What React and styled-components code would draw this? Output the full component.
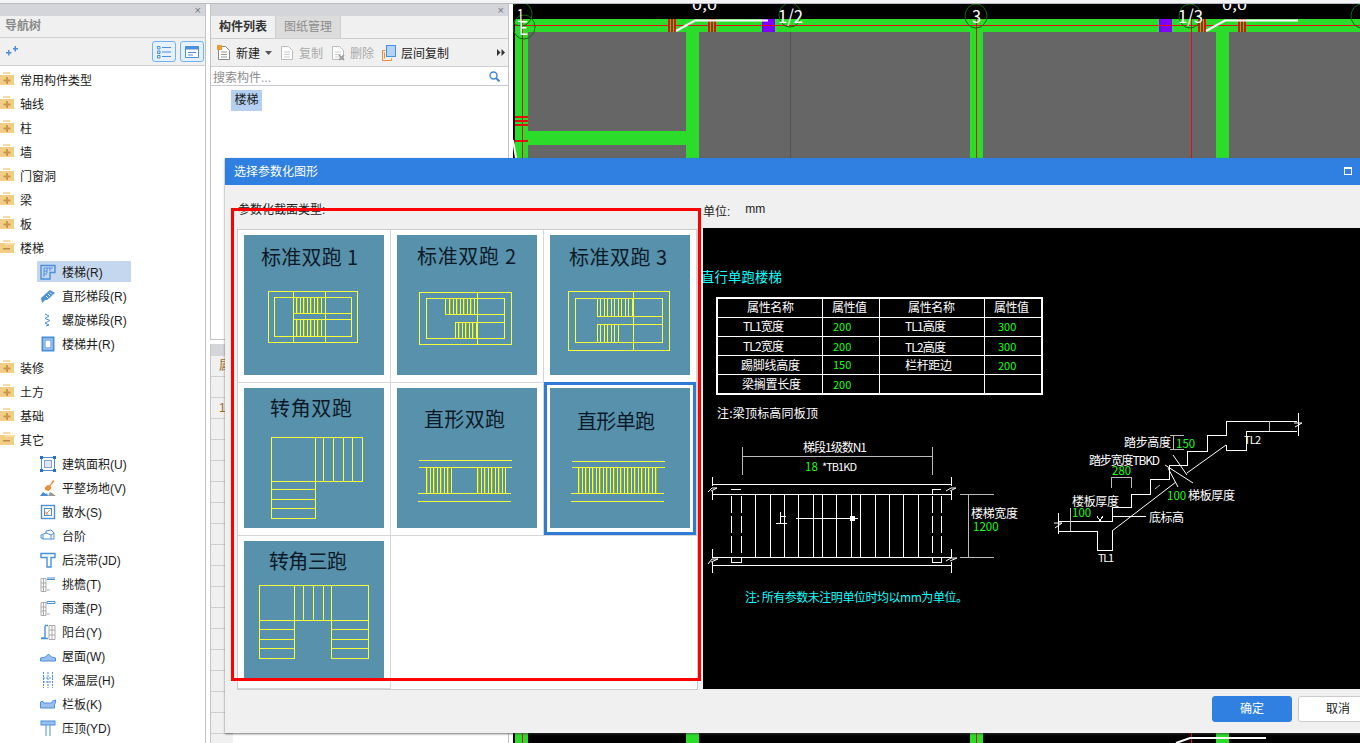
import React from 'react'
import styled, { createGlobalStyle } from 'styled-components'

const GlobalStyle = createGlobalStyle`
  html, body { margin: 0; padding: 0; background: #fff; overflow: hidden; }
  body { font-family: "Liberation Sans", "Noto Sans CJK SC", sans-serif; font-size: 12px; color: #1a1a1a; }
  * { box-sizing: border-box; }
`

const BLUE = '#2f80e0'
const ICON = '#4a8fdc'

const Screen = styled.div`
  position: relative;
  width: 1360px;
  height: 743px;
  overflow: hidden;
  display: flex;
  flex-direction: column;
`
const TopStrip = styled.div`
  height: 4px;
  flex: none;
  background: #f4f4f6;
  border-bottom: 1px solid #b9bac2;
`
const Main = styled.div`
  flex: 1;
  min-height: 0;
  display: flex;
`

/* dock panels */
const PanelHead = styled.div`
  height: 12px;
  flex: none;
  background: #d3d5da;
  display: flex;
  align-items: center;
  justify-content: flex-end;
  padding-right: 4px;
  color: #777;
  font-size: 11px;
  line-height: 1;
`
const NavPanel = styled.aside`
  width: 206px;
  flex: none;
  display: flex;
  flex-direction: column;
  border-right: 1px solid #c4c4c8;
  overflow: hidden;
`
const NavTitle = styled.div`
  height: 22px;
  flex: none;
  background: #f0f0f0;
  border-bottom: 1px solid #cfcfcf;
  padding-left: 5px;
  line-height: 21px;
  color: #8a8a8a;
  font-weight: 700;
`
const NavTools = styled.div`
  height: 28px;
  flex: none;
  background: #f0f0f0;
  border-bottom: 1px solid #cfcfcf;
  display: flex;
  align-items: center;
  padding: 0 1px 0 4px;
  gap: 4px;
`
const ViewButton = styled.div`
  width: 24px;
  height: 21px;
  border: 1px solid #6fb3f2;
  border-radius: 3px;
  background: #e6f1fc;
  display: flex;
  align-items: center;
  justify-content: center;
  &:first-of-type { margin-left: auto; }
`
const Tree = styled.div`
  padding-top: 1px;
`
const Row = styled.div`
  height: 24px;
  display: flex;
  align-items: center;
  white-space: nowrap;
  padding-left: ${p => (p.$child ? 37 : 0)}px;
`
const FolderLabel = styled.span`
  margin-left: 5px;
`
const Item = styled.div`
  width: 94px;
  height: 21px;
  margin-top: 1px;
  display: flex;
  align-items: center;
  gap: 6px;
  padding-left: 3px;
  background: ${p => (p.$selected ? '#c5d7ef' : 'transparent')};
`

const ListColumn = styled.div`
  width: 303px;
  flex: none;
  margin-left: 4px;
  padding-right: 4px;
  display: flex;
  flex-direction: column;
  gap: 4px;
`
const ListPanel = styled.section`
  height: 336px;
  flex: none;
  display: flex;
  flex-direction: column;
  border-left: 1px solid #c4c4c8;
  border-right: 1px solid #c4c4c8;
  border-bottom: 1px solid #c4c4c8;
`
const Tabs = styled.div`
  height: 23px;
  flex: none;
  display: flex;
  background: #f0f0f0;
  border-bottom: 1px solid #cfcfcf;
`
const Tab = styled.div`
  width: 65px;
  text-align: center;
  line-height: 22px;
  color: ${p => (p.$active ? '#333' : '#8c8c8c')};
  font-weight: ${p => (p.$active ? 700 : 400)};
  background: ${p => (p.$active ? '#f0f0f0' : '#dcdcdc')};
  border-right: 1px solid #cfcfcf;
`
const ListTools = styled.div`
  height: 28px;
  flex: none;
  display: flex;
  align-items: center;
  gap: 8px;
  padding-left: 6px;
  background: #f0f0f0;
  border-bottom: 1px solid #cfcfcf;
`
const ToolButton = styled.div`
  display: flex;
  align-items: center;
  gap: 5px;
  color: ${p => (p.$disabled ? '#aaa' : '#222')};
`
const MoreArrows = styled.div`
  margin-left: auto;
  padding-right: 3px;
  display: flex;
`
const Search = styled.div`
  height: 19px;
  flex: none;
  display: flex;
  align-items: center;
  justify-content: space-between;
  padding: 0 8px 0 2px;
  color: #8c8c8c;
  border-bottom: 1px solid #c9c9cf;
`
const ListBody = styled.div`
  flex: 1;
  padding: 4px 0 0 20px;
`
const Chosen = styled.span`
  display: inline-block;
  width: 31px;
  height: 21px;
  line-height: 21px;
  text-align: center;
  background: #b4cff0;
`
const PropsPanel = styled.section`
  flex: 1;
  min-height: 0;
  overflow: hidden;
  display: flex;
  flex-direction: column;
  border-left: 1px solid #c4c4c8;
  border-right: 1px solid #c4c4c8;
`
const PropRow = styled.div`
  height: 21px;
  flex: none;
  width: 22px;
  padding-left: 8px;
  line-height: 21px;
  background: #f0f0f0;
  border-bottom: 1px solid #cfcfcf;
  color: #a06a20;
`

const Canvas = styled.div`
  flex: 1;
  min-width: 0;
  background: #000;
`
const FullSvg = styled.svg`
  display: block;
`

/* dialog */
const Dialog = styled.div`
  position: absolute;
  left: 225px;
  top: 158px;
  width: 1163px;
  height: 575px;
  background: #f0f0f0;
  box-shadow: 0 1px 2px rgba(60, 60, 60, 0.7);
  display: flex;
  flex-direction: column;
`
const DialogTitle = styled.div`
  height: 27px;
  flex: none;
  background: ${BLUE};
  color: #fff;
  display: flex;
  align-items: center;
  justify-content: space-between;
  padding: 0 36px 2px 9px;
`
const MaxBox = styled.span`
  width: 8px;
  height: 8px;
  border: 1px solid #fff;
  border-top-width: 2px;
`
const DialogBody = styled.div`
  display: grid;
  grid-template-columns: 478px 1fr;
  grid-template-rows: 43px 461px;
  flex: none;
`
const SectionLabel = styled.div`
  padding: 15px 0 0 13px;
  color: #222;
`
const UnitLabel = styled.div`
  padding-top: 17px;
  display: flex;
  gap: 15px;
  color: #222;
`
const ShapeFrame = styled.div`
  margin: 1px 0 0 12px;
  width: 461px;
  height: 461px;
  border: 1px solid #ccc;
  background: #fff;
  display: grid;
  grid-template-columns: repeat(3, 153px);
  grid-auto-rows: 153px;
  align-content: start;
`
const ShapeCell = styled.div`
  padding: ${p => (p.$selected ? '6px 0 0 6px' : '5px 0 0 6px')};
  margin-top: ${p => (p.$selected ? -1 : 0)}px;
  border-right: 1px solid #d6d6d6;
  border-bottom: 1px solid #d6d6d6;
  box-shadow: ${p => (p.$selected ? 'inset 0 0 0 3px #2e7bd6' : 'none')};
`
const Thumb = styled.svg`
  display: block;
  width: 140px;
  height: 140px;
  background: #5891ab;
`
const ThumbTitle = styled.text`
  font-family: "Noto Sans CJK SC", sans-serif;
  font-size: 20px;
  fill: #0c1a28;
`
const PlanLine = styled.path`
  fill: none;
  stroke: ${p => (p.$dim ? '#a9b400' : '#f6ff3c')};
  stroke-width: 1;
  shape-rendering: crispEdges;
`
const Preview = styled.div`
  background: #000;
  overflow: hidden;
`
const DialogFooter = styled.div`
  display: flex;
  justify-content: flex-end;
  gap: 6px;
  padding: 7px 10px 0 0;
`
const Button = styled.div`
  width: 80px;
  height: 26px;
  line-height: 24px;
  text-align: center;
  border-radius: 3px;
  border: 1px solid ${p => (p.$primary ? BLUE : '#ccc')};
  background: ${p => (p.$primary ? BLUE : '#fff')};
  color: ${p => (p.$primary ? '#fff' : '#222')};
`
const RedMark = styled.div`
  position: absolute;
  left: 231px;
  top: 208px;
  width: 470px;
  height: 473px;
  border: 3px solid #f00;
  pointer-events: none;
`

/* CAD drawing parts */
const Cad = styled.text`
  font-family: "Noto Sans CJK SC", "Liberation Sans", sans-serif;
  font-size: ${p => p.$size || 12}px;
  fill: ${p => p.$color || '#fff'};
`
const Wire = styled.path`
  fill: none;
  stroke: ${p => p.$color || '#fff'};
  stroke-width: ${p => p.$w || 1};
  shape-rendering: ${p => (p.$smooth ? 'auto' : 'crispEdges')};
`

/* little helpers for the line drawings */
const box = (x, y, x2, y2) => `M${x} ${y}H${x2}V${y2}H${x}Z`
const bars = (x0, x1, step, y0, y1) => {
  let d = ''
  for (let x = x0; x <= x1 + 0.01; x += step) d += `M${Math.round(x)} ${y0}V${y1}`
  return d
}
const hline = (x, x2, ...ys) => ys.map(y => `M${x} ${y}H${x2}`).join('')
const vline = (y, y2, ...xs) => xs.map(x => `M${x} ${y}V${y2}`).join('')
// treads: a bright line every 3.5px, every other one with an olive shadow
const treads = (x0, x1, y0, y1) => bars(x0, x1, 3.5, y0, y1)
const shadows = (x0, x1, y0, y1) => bars(x0 + 1, x1, 7, y0, y1)

const shapes = [
  {
    title: '标准双跑 1', x: 17, w: 97, y: 30,
    d: box(24, 56, 113, 107) + box(30, 62, 107, 101) + vline(56, 107, 49, 81) + hline(49, 107, 78, 84) + treads(52, 79, 62, 78) + treads(52, 79, 84, 101),
    dim: shadows(52, 79, 62, 78) + shadows(52, 79, 84, 101)
  },
  {
    title: '标准双跑 2', x: 20, w: 99, y: 29,
    d: box(22, 57, 114, 109) + box(29, 63, 107, 103) + vline(57, 109, 80) + hline(48, 107, 79) + hline(58, 107, 87) + vline(63, 79, 48) + vline(87, 103, 58) + treads(52, 79, 63, 79) + treads(61, 79, 87, 103),
    dim: shadows(52, 79, 63, 79) + shadows(61, 79, 87, 103)
  },
  {
    title: '标准双跑 3', x: 19, w: 98, y: 30,
    d: box(18, 56, 119, 115) + box(25, 63, 112, 107) + vline(56, 115, 83) + hline(47, 112, 81, 89) + vline(63, 81, 47) + vline(89, 107, 47) + treads(50, 82, 63, 81) + treads(50, 69, 89, 107),
    dim: ''
  },
  {
    title: '转角双跑', x: 26, w: 82, y: 28,
    d: box(27, 49, 118, 93) + box(27, 93, 71, 130) + vline(49, 130, 71) + vline(49, 93, 79, 89, 99, 108) + hline(27, 71, 101, 111, 120),
    dim: ''
  },
  {
    title: '直形双跑', x: 27, w: 81, y: 39,
    d: hline(22, 115, 72, 79) + hline(21, 114, 105, 113) + treads(29, 55, 79, 105) + treads(80, 108, 79, 105),
    dim: shadows(29, 55, 79, 105) + shadows(80, 108, 79, 105)
  },
  {
    title: '直形单跑', x: 27, w: 78, y: 41,
    d: hline(22, 115, 73, 79) + hline(21, 114, 105, 113) + treads(28, 108, 79, 105),
    dim: shadows(28, 108, 79, 105),
    selected: true
  },
  {
    title: '转角三跑', x: 25, w: 78, y: 28,
    d: box(15, 44, 124, 79) + box(15, 79, 50, 117) + box(87, 79, 124, 117) + vline(44, 79, 50, 59, 69, 79, 87) + hline(15, 50, 88, 98, 107) + hline(87, 124, 88, 98, 107),
    dim: ''
  }
]

/* tree icons, all on a 16px box */
const Glyph = ({ name }) => {
  const blue = { fill: 'none', stroke: ICON, strokeWidth: 1 }
  const gray = { fill: 'none', stroke: '#a9a9a9', strokeWidth: 1 }
  const paths = {
    stair: <><path {...blue} strokeWidth="1.4" d="M1 1.5h14v7h-5v6.5H1z" /><path {...blue} d="M4 4h9M4 4v9M7 4v5M10 4v3M4 7h3M4 10h3" /></>,
    flight: <><path fill={ICON} d="M1 10l9-8 5 3-8 7-2 0-3 3z" /><path stroke="#fff" d="M6 8l2 2M8 6l2 2M10 4.500l2 2" /></>,
    spiral: <path {...blue} d="M5 2l4 2-4 2.500 5 2-5 2.500 4 2-3 1" />,
    well: <><rect x="2.500" y="1.500" width="11" height="13" fill="#cfe1f6" stroke={ICON} strokeWidth="2" /><rect x="5" y="4" width="6" height="8" fill="#fff" stroke={ICON} /></>,
    area: <><rect x="1.500" y="1.500" width="13" height="13" fill="#fff" stroke={ICON} /><rect x="4.500" y="4.500" width="7" height="7" fill="#dce6f3" stroke="#8aa8cc" /><path fill="#2c6fc0" d="M0 0h3v3H0zM13 0h3v3h-3zM0 13h3v3H0zM13 13h3v3h-3z" /></>,
    site: <><path fill="#ee8a3a" d="M13 0l1.500 1-4 5 1 2-3 3-3-1-1-2 3-3 2 .5z" /><path fill={ICON} d="M0 16l3-4 3 2 1-1 1 3z" /><path fill="#999" d="M8 16l2-4 2 1 4 3z" /></>,
    apron: <><rect x="1.500" y="1.500" width="13" height="13" fill="#fff" stroke={ICON} strokeWidth="1.400" /><rect x="4.500" y="4.500" width="7" height="7" fill="#fff" stroke={ICON} /><path stroke="#ee8a3a" d="M10.500 5.500L6 10M6 7.500V10h2.500" fill="none" /></>,
    step: <><path {...blue} d="M1 7l5-2v-2l5-1 3 3v6H3l-2-1z" /><path {...blue} d="M6 5l5 2 3-2M11 7v4M3 7v4" /></>,
    band: <path {...blue} strokeWidth="1.400" d="M1 1.500h14v4h-4V15H7V5.500H1z" />,
    eave: <><path {...gray} d="M1 2.500h5v13H1zM1 7h5M1 11h5M3.500 2.500v13M7 14h3" /><path stroke={ICON} fill="none" strokeWidth="1.200" d="M7 2h8M7 3.500h8" /></>,
    canopy: <><path {...gray} d="M1 2.500h5v13H1zM1 7h5M1 11h5M3.500 2.500v13M7 14h3" /><path stroke={ICON} fill="none" d="M7 1.500h8v2H7z" /></>,
    balcony: <><path {...gray} d="M9 1.500h6v14H9zM9 6h6M9 11h6M12 1.500v14" /><path stroke={ICON} fill="none" strokeWidth="1.400" d="M5 2v12H1M5 1.500h3M1 14.500h7" /></>,
    roof: <path fill="#9cc0ec" stroke={ICON} d="M.5 13v-3l5-1 3-3 3 3 4 1v3z" />,
    insul: <path {...blue} strokeDasharray="2 1" d="M3.500 0v16M8 0v16M12.500 0v16M3 6h10M3 10h10" />,
    rail: <path fill="#9cc0ec" stroke={ICON} d="M.5 6l2-1 1 2h8l1-2 3-1v2l-1 3v3H.5z" />,
    coping: <><rect x="1" y="1" width="14" height="4" fill="#9cc0ec" stroke={ICON} /><path stroke={ICON} d="M6 5v11M10 5v11" /></>
  }
  return <svg width="16" height="16" viewBox="0 0 16 16">{paths[name]}</svg>
}

const Folder = ({ open }) => (
  <svg width="15" height="14" viewBox="0 0 15 14">
    <path fill="#f7dca8" d="M3 0h7l1 2H3z" />
    <path fill="#f3cd84" d="M0 3h14v10H0z" />
    {open
      ? <><path fill="#f7dca8" d="M5 3h10v2H5z" /><path fill="#b98f4a" d="M3 8h7v1.500H3z" /></>
      : <path fill="#c79a4e" d="M6 5h2v2.500h2.500v2H8V12H6V9.500H3.500v-2H6z" />}
  </svg>
)

const tree = [
  { label: '常用构件类型' }, { label: '轴线' }, { label: '柱' }, { label: '墙' },
  { label: '门窗洞' }, { label: '梁' }, { label: '板' }, { label: '楼梯', open: true },
  { label: '楼梯(R)', icon: 'stair', selected: true },
  { label: '直形梯段(R)', icon: 'flight' },
  { label: '螺旋梯段(R)', icon: 'spiral' },
  { label: '楼梯井(R)', icon: 'well' },
  { label: '装修' }, { label: '土方' }, { label: '基础' }, { label: '其它', open: true },
  { label: '建筑面积(U)', icon: 'area' },
  { label: '平整场地(V)', icon: 'site' },
  { label: '散水(S)', icon: 'apron' },
  { label: '台阶', icon: 'step' },
  { label: '后浇带(JD)', icon: 'band' },
  { label: '挑檐(T)', icon: 'eave' },
  { label: '雨蓬(P)', icon: 'canopy' },
  { label: '阳台(Y)', icon: 'balcony' },
  { label: '屋面(W)', icon: 'roof' },
  { label: '保温层(H)', icon: 'insul' },
  { label: '栏板(K)', icon: 'rail' },
  { label: '压顶(YD)', icon: 'coping' }
]

const NavTree = () => (
  <Tree>
    {tree.map(node => node.icon ? (
      <Row $child key={node.label}>
        <Item $selected={node.selected}><Glyph name={node.icon} />{node.label}</Item>
      </Row>
    ) : (
      <Row key={node.label}>
        <Folder open={node.open} />
        <FolderLabel>{node.label}</FolderLabel>
      </Row>
    ))}
  </Tree>
)

const PageIcon = ({ muted, mark }) => (
  <svg width="14" height="16" viewBox="0 0 14 16">
    <path fill="#fff" stroke={muted ? '#bbb' : '#888'} d="M1.500 1.500h7l4 4v9h-11z" />
    <path stroke={muted ? '#ccc' : '#999'} d="M4 7h6M4 9.500h6M4 12h6" />
    {mark === 'star' && <path fill="#f29a2e" d="M0 0h5v5H0z" />}
    {mark === 'cross' && <path stroke="#999" strokeWidth="1.500" d="M8 10l5 5M13 10l-5 5" />}
  </svg>
)
const LayerIcon = () => (
  <svg width="14" height="16" viewBox="0 0 14 16">
    <path fill="none" stroke="#ee8a3a" d="M.5 15.500v-10h3M.5 15.500h9v-2M2.500 13.500v-6" />
    <rect x="4.500" y=".5" width="9" height="11" fill="#b5d3f5" stroke={ICON} />
  </svg>
)

const CanvasDrawing = () => {
  const rooms = [[528, 32, 158, 99], [528, 145, 158, 13], [699, 32, 271, 126], [983, 32, 233, 126], [1229, 32, 131, 126]]
  const ties = [668, 708, 1198, 1238]
  const bubbles = [[521, 14], [524, 27], [790, 15], [976, 16], [1190, 16], [1362, 16]]
  return (
    <FullSvg width="847" height="739" viewBox="513 4 847 739">
      {rooms.map(([x, y, w, h]) => <rect key={`${x}-${y}`} x={x} y={y} width={w} height={h} fill="#666" />)}
      <rect x="515" y="19" width="845" height="13" fill="#2bdc2b" />
      <rect x="528" y="131" width="158" height="14" fill="#2bdc2b" />
      {[515, 686, 970, 1216].map(x => <rect key={x} x={x} y="19" width="13" height="724" fill="#2bdc2b" />)}
      <rect x="528" y="158" width="832" height="585" fill="#000" />
      {[686, 970, 1216].map(x => <rect key={x} x={x} y="158" width="13" height="585" fill="#2bdc2b" />)}
      <rect x="762" y="19" width="13" height="13" fill="#8000ff" />
      <rect x="1159" y="19" width="13" height="13" fill="#8000ff" />
      <Wire $color="#555" d="M790 32V158" />
      <Wire $color="#e01010" d="M515 25H1360M522 19V743M976 19V743M1191 19V743" />
      {ties.map(x => (
        <g key={x}>
          <rect x={x} y="19" width="8" height="13" fill="#e01010" />
          <path stroke="#2bdc2b" d={`M${x + 2.500} 19V32M${x + 5.500} 19V32`} />
        </g>
      ))}
      <Wire $color="#e01010" $w="2" d="M515 117H528M515 121H528M515 125H528M515 141H528" />
      {bubbles.map(([cx, cy]) => <ellipse key={cx} cx={cx} cy={cy} rx="11" ry="12" fill="none" stroke="#0a6a0a" />)}
      <Cad x="517" y="22" $size="18" textLength="7" lengthAdjust="spacingAndGlyphs">1</Cad>
      <Cad x="519" y="35" $size="18" textLength="9" lengthAdjust="spacingAndGlyphs">E</Cad>
      <Cad x="778" y="23" $size="18" textLength="25" lengthAdjust="spacingAndGlyphs">1/2</Cad>
      <Cad x="972" y="23" $size="18" textLength="9" lengthAdjust="spacingAndGlyphs">3</Cad>
      <Cad x="1178" y="23" $size="18" textLength="25" lengthAdjust="spacingAndGlyphs">1/3</Cad>
      <Cad x="692" y="10" $size="14" textLength="25" lengthAdjust="spacingAndGlyphs">0,0</Cad>
      <Cad x="1222" y="10" $size="14" textLength="25" lengthAdjust="spacingAndGlyphs">0,0</Cad>
      <Wire $smooth $w="2" d="M676 31L695 20.500H768M1206 31L1225 20.500H1298" />
      <Wire $smooth $w="2" d="M513 140L516 158" />
      <Wire $smooth $w="2" d="M1176 743L1190 738H1266" />
    </FullSvg>
  )
}

const PreviewDrawing = () => {
  const rows = [
    ['TL1宽度', 743, 327, 41, '200', 833, 327, 'TL1高度', 905, 327, 41, '300', 998, 327],
    ['TL2宽度', 743, 347, 41, '200', 833, 347, 'TL2高度', 905, 348, 41, '300', 998, 347],
    ['踢脚线高度', 741, 366, 59, '150', 833, 365, '栏杆距边', 905, 366, 47, '200', 998, 366],
    ['梁搁置长度', 742, 385, 59, '200', 833, 385]
  ]
  const steps = [755, 770, 784, 798, 813, 822, 836, 851, 860, 875, 889, 903, 918]
  const grn = '#19ff19'
  return (
    <FullSvg width="685" height="461" viewBox="703 228 685 461">
      <Cad x="701" y="282" $size="13.400" $color="#1ff" textLength="81">直行单跑楼梯</Cad>

      <Wire $w="2" d={box(717, 298, 1042, 394)} />
      <Wire d={vline(298, 394, 822, 879, 984) + hline(717, 1042, 317, 336, 355, 374)} />
      <Cad x="747" y="312" textLength="47">属性名称</Cad>
      <Cad x="832" y="312" textLength="35">属性值</Cad>
      <Cad x="908" y="312" textLength="47">属性名称</Cad>
      <Cad x="994" y="312" textLength="35">属性值</Cad>
      {rows.map(([a, ax, ay, aw, v, vx, vy, b, bx, by, bw, u, ux, uy]) => (
        <g key={a}>
          <Cad x={ax} y={ay + 4} textLength={aw}>{a}</Cad>
          <Cad x={vx} y={vy + 4} $size="11" $color={grn}>{v}</Cad>
          {b && <Cad x={bx} y={by + 4} textLength={bw}>{b}</Cad>}
          {u && <Cad x={ux} y={uy + 4} $size="11" $color={grn}>{u}</Cad>}
        </g>
      ))}
      <Cad x="717" y="418" textLength="101">注:梁顶标高同板顶</Cad>

      {/* plan of the flight */}
      <Cad x="803" y="452" textLength="64">梯段1级数N1</Cad>
      <Wire $color="#bbb" d="M742 456H932M742 447V475M932 447V475" />
      <Cad x="805" y="471" $size="11.500" $color={grn}>18</Cad>
      <Cad x="822" y="471" $size="11" textLength="35">*TB1KD</Cad>
      <Wire d={hline(712, 951, 484, 494, 557, 565) + vline(494, 557, ...steps)} />
      <Wire d="M712 477V486M712 491V500M951 477V486M951 491V500M712 549V558M712 562V573M951 549V558M951 562V573" />
      <Wire $smooth d="M708 492L712 488H717L711 491M946 491L951 488H956L950 491M708 564L712 559H718L711 562M946 561L951 558H957L950 561" />
      <path stroke="#fff" strokeDasharray="17 3" d="M731.500 496V556M741.500 496V556M932.500 496V556M941.500 496V556" />
      <Wire d="M731 489H741M932 489H941M932 489V494M731 557V562H741V557M932 557V562H941V557" />
      <Wire d="M796 518H858" />
      <rect x="850" y="516" width="5" height="5" fill="#fff" />
      <Wire d="M780 512V523M776 523H787M780 516H786" />
      <Wire $color="#bbb" d="M960 494H994M960 557H994M968 494V557" />
      <Cad x="971" y="518" textLength="47">楼梯宽度</Cad>
      <Cad x="973" y="531" $size="11.500" $color={grn}>1200</Cad>
      <Cad x="745" y="602" $color="#1ff" textLength="223">注: 所有参数未注明单位时均以mm为单位。</Cad>

      {/* section through the flight */}
      <Wire d="M1058 521H1112V507H1131V494H1150V479H1169V465H1187V451H1207V435H1226V421H1297" />
      <Wire d="M1058 531H1097V550H1112V531" />
      <Wire d="M1226 445V450H1246V431H1297" />
      <Wire $smooth d="M1112 531L1176 482M1187 473L1226 445" />
      <Wire d="M1058 513V534M1298 413V436" />
      <Wire $smooth d="M1055 528L1062 523H1054M1295 427L1302 423H1294" />
      <Wire $smooth d="M1173 455L1187 475M1165 465L1193 483M1168 468L1178 487" />
      <Wire $color="#bbb" d="M1173 435V449M1170 435H1184M1170 449H1184M1111 477H1131M1111 477V488M1131 477V488M1070 508V531M1269 421V431" />
      <Wire d="M1112 516H1146M1097 516L1100 521L1103 516" />
      <Wire $smooth $color="#bbb" d="M1155 489L1160 485" />
      <Cad x="1124" y="447" textLength="47">踏步高度</Cad>
      <Cad x="1176" y="448" $size="11.500" $color={grn}>150</Cad>
      <Cad x="1089" y="465" textLength="71">踏步宽度TBKD</Cad>
      <Cad x="1112" y="475" $size="11.500" $color={grn}>280</Cad>
      <Cad x="1072" y="506" textLength="47">楼板厚度</Cad>
      <Cad x="1072" y="517" $size="11.500" $color={grn}>100</Cad>
      <Cad x="1167" y="500" $size="11.500" $color={grn}>100</Cad>
      <Cad x="1188" y="500" textLength="47">梯板厚度</Cad>
      <Cad x="1149" y="522" textLength="35">底标高</Cad>
      <Cad x="1098" y="562" $size="11" textLength="16">TL1</Cad>
      <Cad x="1244" y="444" $size="11" textLength="17">TL2</Cad>
    </FullSvg>
  )
}

export default function App() {
  return (
    <Screen>
      <GlobalStyle />
      <TopStrip />
      <Main>
        <NavPanel>
          <PanelHead>×</PanelHead>
          <NavTitle>导航树</NavTitle>
          <NavTools>
            <svg width="14" height="12" viewBox="0 0 14 12">
              <path fill={ICON} d="M2 6h2V4h1.500v2h2v1.500h-2v2H4v-2H2zM9 2h1.500V0H12v2h2v1.500h-2v2h-1.500v-2H9z" />
            </svg>
            <ViewButton>
              <svg width="14" height="14" viewBox="0 0 14 14">
                <path fill="none" stroke={ICON} d="M.5 1.500h2.500v2.500H.5zM.5 6h2.500v2.500H.5zM.5 10.500h2.500V13H.5zM5 2.500h9M5 7h9M5 11.500h9" />
              </svg>
            </ViewButton>
            <ViewButton>
              <svg width="16" height="14" viewBox="0 0 16 14">
                <path fill="#fff" stroke={ICON} d="M1.500 1.500h13v11h-13z" />
                <path fill={ICON} d="M1.500 1.500h13v3h-13z" />
                <path stroke={ICON} d="M4 7.500h8M4 10h5" />
              </svg>
            </ViewButton>
          </NavTools>
          <NavTree />
        </NavPanel>

        <ListColumn>
          <ListPanel>
            <PanelHead>×</PanelHead>
            <Tabs>
              <Tab $active>构件列表</Tab>
              <Tab>图纸管理</Tab>
            </Tabs>
            <ListTools>
              <ToolButton>
                <PageIcon mark="star" />新建
                <svg width="7" height="4" viewBox="0 0 7 4"><path fill="#555" d="M0 0h7L3.500 4z" /></svg>
              </ToolButton>
              <ToolButton $disabled><PageIcon muted />复制</ToolButton>
              <ToolButton $disabled><PageIcon muted mark="cross" />删除</ToolButton>
              <ToolButton><LayerIcon />层间复制</ToolButton>
              <MoreArrows>
                <svg width="8" height="7" viewBox="0 0 8 7"><path fill="#333" d="M0 0l3.500 3.500L0 7zM4.500 0L8 3.500 4.500 7z" /></svg>
              </MoreArrows>
            </ListTools>
            <Search>
              搜索构件...
              <svg width="11" height="11" viewBox="0 0 11 11">
                <circle cx="4.500" cy="4.500" r="3.500" fill="none" stroke="#3f8ad8" strokeWidth="1.400" />
                <path stroke="#3f8ad8" strokeWidth="2" d="M7 7l3.500 3.500" />
              </svg>
            </Search>
            <ListBody><Chosen>楼梯</Chosen></ListBody>
          </ListPanel>
          <PropsPanel>
            <PanelHead />
            <PropRow>属</PropRow>
            <PropRow />
            <PropRow>1</PropRow>
            {Array.from({ length: 16 }, (_, i) => <PropRow key={i} />)}
          </PropsPanel>
        </ListColumn>

        <Canvas><CanvasDrawing /></Canvas>
      </Main>

      <Dialog>
        <DialogTitle>选择参数化图形<MaxBox /></DialogTitle>
        <DialogBody>
          <SectionLabel>参数化截面类型:</SectionLabel>
          <UnitLabel><span>单位:</span><span>mm</span></UnitLabel>
          <ShapeFrame>
            {shapes.map(s => (
              <ShapeCell key={s.title} $selected={s.selected}>
                <Thumb viewBox="0 0 140 140">
                  <ThumbTitle x={s.x} y={s.y} textLength={s.w}>{s.title}</ThumbTitle>
                  {s.dim && <PlanLine $dim d={s.dim} />}
                  <PlanLine d={s.d} />
                </Thumb>
              </ShapeCell>
            ))}
          </ShapeFrame>
          <Preview><PreviewDrawing /></Preview>
        </DialogBody>
        <DialogFooter>
          <Button $primary>确定</Button>
          <Button>取消</Button>
        </DialogFooter>
      </Dialog>
      <RedMark />
    </Screen>
  )
}
